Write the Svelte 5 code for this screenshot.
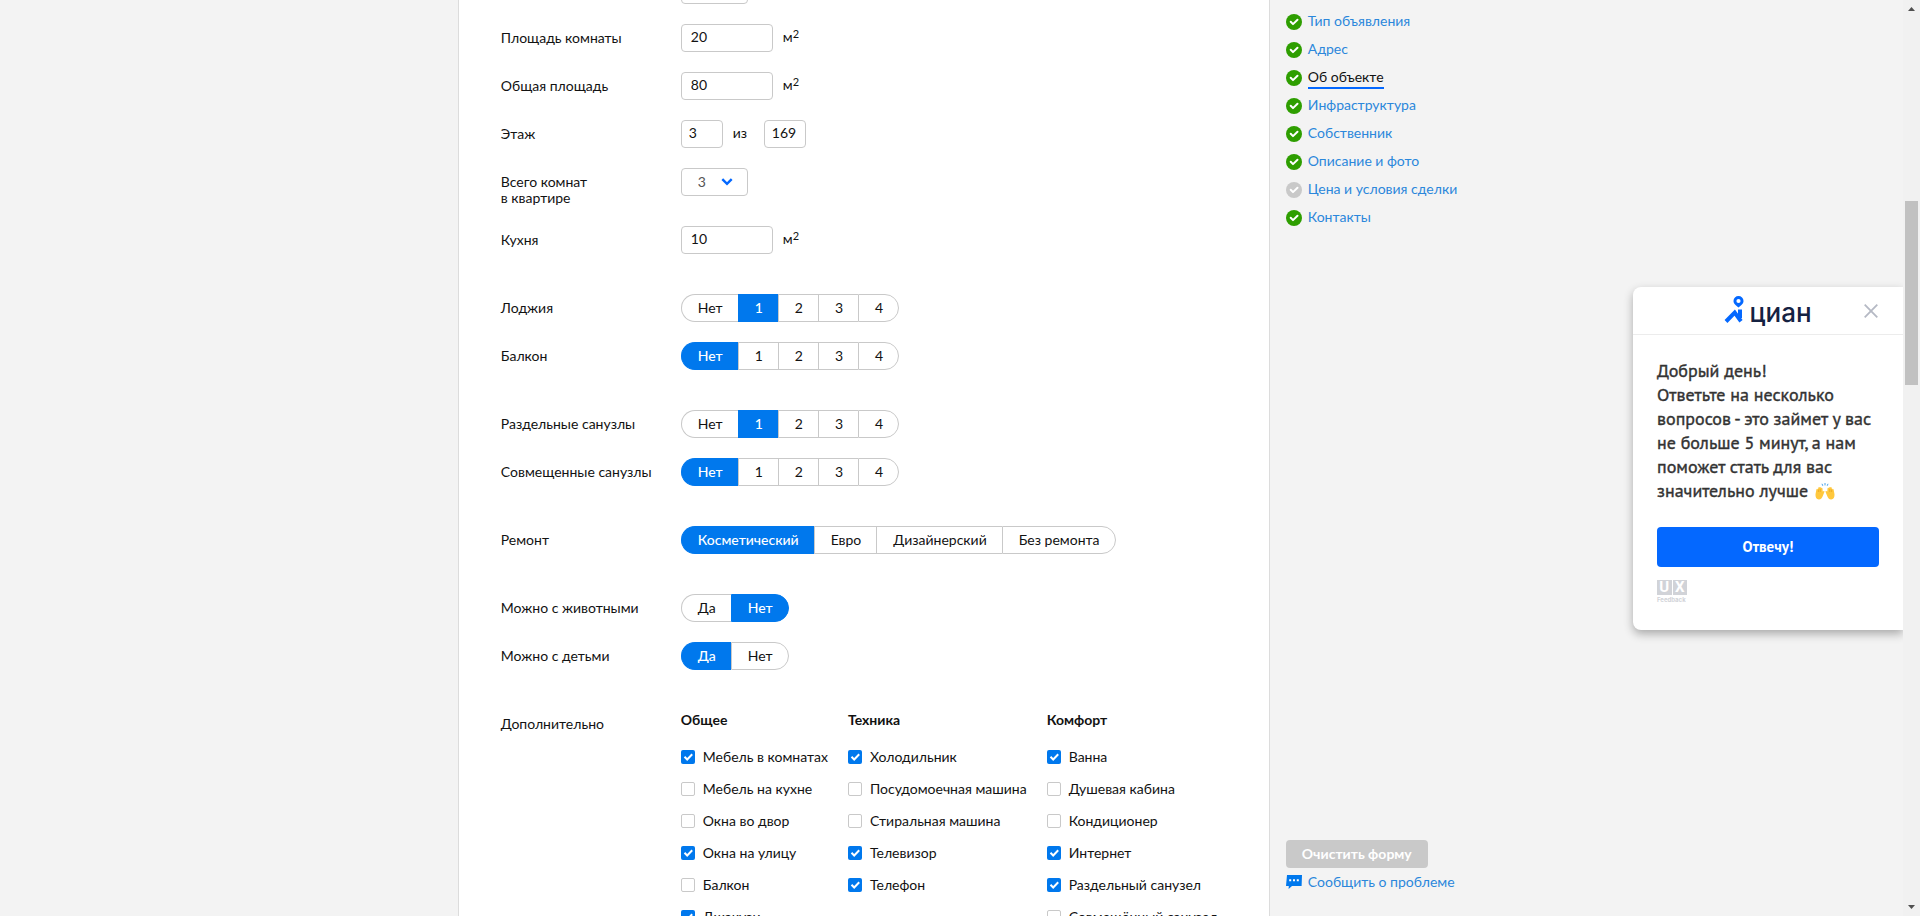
<script>
  const areaTop = [
    { id: 'room', label: 'Площадь комнаты', value: '20' },
    { id: 'total', label: 'Общая площадь', value: '80' }
  ];
  const counts = ['Нет', '1', '2', '3', '4'];
  let groups = $state([
    [
      { id: 'loggia', label: 'Лоджия', options: counts, value: '1' },
      { id: 'balcony', label: 'Балкон', options: counts, value: 'Нет' }
    ],
    [
      { id: 'separate', label: 'Раздельные санузлы', options: counts, value: '1' },
      { id: 'combined', label: 'Совмещенные санузлы', options: counts, value: 'Нет' }
    ],
    [
      {
        id: 'repair',
        label: 'Ремонт',
        options: ['Косметический', 'Евро', 'Дизайнерский', 'Без ремонта'],
        value: 'Косметический'
      }
    ],
    [
      { id: 'pets', label: 'Можно с животными', options: ['Да', 'Нет'], value: 'Нет' },
      { id: 'kids', label: 'Можно с детьми', options: ['Да', 'Нет'], value: 'Да' }
    ]
  ]);
  const extras = [
    {
      title: 'Общее',
      items: [
        ['Мебель в комнатах', true],
        ['Мебель на кухне', false],
        ['Окна во двор', false],
        ['Окна на улицу', true],
        ['Балкон', false],
        ['Джакузи', true]
      ]
    },
    {
      title: 'Техника',
      items: [
        ['Холодильник', true],
        ['Посудомоечная машина', false],
        ['Стиральная машина', false],
        ['Телевизор', true],
        ['Телефон', true]
      ]
    },
    {
      title: 'Комфорт',
      items: [
        ['Ванна', true],
        ['Душевая кабина', false],
        ['Кондиционер', false],
        ['Интернет', true],
        ['Раздельный санузел', true],
        ['Совмещённый санузел', false]
      ]
    }
  ];
  const nav = [
    { label: 'Тип объявления', done: true },
    { label: 'Адрес', done: true },
    { label: 'Об объекте', done: true, current: true },
    { label: 'Инфраструктура', done: true },
    { label: 'Собственник', done: true },
    { label: 'Описание и фото', done: true },
    { label: 'Цена и условия сделки', done: false },
    { label: 'Контакты', done: true }
  ];
</script>

{#snippet area(id, label, value)}
  <div class="row">
    <label class="name" for={id}>{label}</label>
    <div class="field">
      <input class="text wide" {id} type="text" {value} />
      <span class="unit">м<sup>2</sup></span>
    </div>
  </div>
{/snippet}

{#snippet dropdown(id)}
  <div class="select">
    <select {id} aria-label="Количество комнат">
      <option>3</option>
      <option>4</option>
      <option>5</option>
    </select>
    <svg width="12" height="8" viewBox="0 0 12 8" aria-hidden="true">
      <path d="M1.3 1.2 6 5.9l4.7-4.7" fill="none" stroke="#0468ff" stroke-width="2.4" />
    </svg>
  </div>
{/snippet}

<div class="shell">
  <div class="page">
    <main>
      <form>
        <div class="block">
          <div class="row">
            <span class="name"></span>
            {@render dropdown('rooms-offered')}
          </div>
          {#each areaTop as a}
            {@render area(a.id, a.label, a.value)}
          {/each}
          <div class="row">
            <label class="name" for="floor">Этаж</label>
            <div class="field">
              <input class="text narrow" id="floor" type="text" value="3" />
              <label class="of" for="floors">из</label>
              <input class="text narrow" id="floors" type="text" value="169" />
            </div>
          </div>
          <div class="row">
            <label class="name" for="rooms-total">Всего комнат<br />в квартире</label>
            {@render dropdown('rooms-total')}
          </div>
          {@render area('kitchen', 'Кухня', '10')}
        </div>

        {#each groups as group}
          <div class="block">
            {#each group as row}
              <div class="row">
                <span class="name" id="{row.id}-label">{row.label}</span>
                <div class="segments" role="radiogroup" aria-labelledby="{row.id}-label">
                  {#each row.options as option}
                    <label class:on={row.value === option}>
                      <input type="radio" name={row.id} value={option} bind:group={row.value} />
                      {option}
                    </label>
                  {/each}
                </div>
              </div>
            {/each}
          </div>
        {/each}

        <div class="row">
          <span class="name">Дополнительно</span>
          <div class="extras">
            {#each extras as col}
              <fieldset>
                <legend>{col.title}</legend>
                {#each col.items as [text, checked]}
                  <label class="check">
                    <input type="checkbox" {checked} />
                    <svg width="14" height="14" viewBox="0 0 14 14" aria-hidden="true">
                      <path d="M3.5 6.8 6.2 9.500l5-5.200" fill="none" stroke="#fff" stroke-width="2" />
                    </svg>
                    <span>{text}</span>
                  </label>
                {/each}
              </fieldset>
            {/each}
          </div>
        </div>
      </form>
    </main>

    <aside>
      <nav>
        {#each nav as item}
          <a href="#section" class:current={item.current}>
            <svg width="16" height="16" viewBox="0 0 16 16" aria-hidden="true">
              <circle cx="8" cy="8" r="8" fill={item.done ? '#2e9e00' : '#c9c9c9'} />
              <path
                d="M4.700 7.800 7 10.100l4.500-4.300"
                fill="none"
                stroke="#fff"
                stroke-width="2"
                stroke-linecap="round"
                stroke-linejoin="round"
              />
            </svg>
            <span>{item.label}</span>
          </a>
        {/each}
      </nav>
      <div class="actions">
        <button type="button" class="clear">Очистить форму</button>
        <a href="#report">
          <svg width="16" height="14" viewBox="0 0 16 14" aria-hidden="true">
            <path d="M1 0h15l-.4 11H6l-3.400 3 .2-3H0z" fill="#0078ed" />
            <path d="M3.200 4.200h2v2h-2zM7 4.200h2v2H7zM10.800 4.200h2v2h-2z" fill="#fff" />
          </svg>
          <span>Сообщить о проблеме</span>
        </a>
      </div>
    </aside>
  </div>

  <section class="survey" aria-label="Опрос">
    <header>
      <span></span>
      <div class="logo">
        <svg width="20" height="29" viewBox="0 0 20 29" aria-hidden="true">
          <path
            fill-rule="evenodd"
            d="M14.500 0a5 5 0 0 0-5 5c0 3 2.500 4.200 5 6.600 2.500-2.400 5-3.600 5-6.600a5 5 0 0 0-5-5zm0 2.900a2.100 2.100 0 1 1 0 4.200 2.100 2.100 0 0 1 0-4.200z"
            fill="#0468ff"
          />
          <path
            d="M2 25.500 10.700 16.600 17 25.200M16 13.500v8.500"
            fill="none"
            stroke="#0468ff"
            stroke-width="4"
          />
        </svg>
        <span>циан</span>
      </div>
      <button type="button" aria-label="Закрыть">
        <svg width="14" height="14" viewBox="0 0 14 14" aria-hidden="true">
          <path d="M.7.7l12.600 12.600M13.300.7.7 13.300" stroke="#b5b9c4" stroke-width="1.800" />
        </svg>
      </button>
    </header>
    <div class="body">
      <p>
        Добрый день!<br />Ответьте на несколько<br />вопросов - это займет у вас<br />не больше 5 минут, а нам<br
        />поможет стать для вас<br />значительно лучше
        <svg width="20" height="17" viewBox="0 0 20 17" aria-hidden="true">
          <path
            d="M1.400 6.500c.5-1.200 1.400-.8 1.500.2l.5-2.200c.3-.8 1.300-.7 1.400.1.400-.6 1.400-.4 1.400.4.700-.4 1.300 0 1.300.8l.2 2.700c1-.9 2-.6 1.700.4l-1.600 4.200c-.7 1.900-1.800 3.400-4 3.400C1.400 16.500.3 14.300.5 11.300z"
            fill="#ffc83d"
          />
          <path
            d="M18.600 6.500c-.5-1.200-1.400-.8-1.500.2l-.5-2.200c-.3-.8-1.300-.7-1.400.1-.4-.6-1.400-.4-1.400.4-.7-.4-1.300 0-1.300.8l-.2 2.700c-1-.9-2-.6-1.700.4l1.600 4.200c.7 1.900 1.800 3.400 4 3.400 2.400 0 3.500-2.200 3.300-5.200z"
            fill="#ffc83d"
          />
          <path d="M3.400 6.500v2.500M5.200 6v3M16.600 6.500v2.500M14.800 6v3" stroke="#e8a01c" stroke-width=".7" />
          <path d="M10 0v2.400M7 .8l.8 2M13 .8l-.8 2" stroke="#4aa3e8" stroke-width="1" />
        </svg>
      </p>
      <button type="button" class="answer">Отвечу!</button>
      <div class="ux">
        <div><b>U</b><b>X</b></div>
        <small>Feedback</small>
      </div>
    </div>
  </section>

  <div class="scrollbar" aria-hidden="true">
    <svg width="17" height="17" viewBox="0 0 17 17"><path d="M5 11h7L8.500 7z" fill="#505050" /></svg>
    <div class="track"><div class="thumb"></div></div>
    <svg width="17" height="17" viewBox="0 0 17 17"><path d="M5 6h7L8.500 10z" fill="#505050" /></svg>
  </div>
</div>

<style>
  :global(body) {
    margin: 0;
    background: #f3f3f3;
  }
  .shell {
    position: relative;
    display: flex;
    height: 100vh;
    overflow: hidden;
    font: 14px/16px Lato, 'Open Sans', sans-serif;
    color: #121212;
  }
  .page {
    flex: 1;
    display: flex;
    justify-content: center;
    gap: 16px;
    padding-left: 12px;
  }
  main {
    flex: 0 1 768px;
    padding: 0 0 0 42px;
    background: #fff;
    border: solid #dcdcdc;
    border-width: 0 1px;
  }
  form {
    margin-top: -24px;
  }
  .block {
    margin-bottom: 40px;
  }
  .row {
    display: flex;
    align-items: flex-start;
    min-height: 28px;
  }
  .row + .row {
    margin-top: 20px;
  }
  .name {
    flex: 0 0 180px;
    padding-top: 6px;
  }
  .field {
    display: flex;
    align-items: center;
  }
  .text,
  select {
    box-sizing: border-box;
    height: 28px;
    border: 1px solid #c9c9c9;
    border-radius: 4px;
    background: #fff;
    font: inherit;
    color: inherit;
  }
  .text {
    padding: 0 9px 3px;
  }
  .wide {
    width: 92px;
  }
  .narrow {
    width: 42px;
    padding: 0 7px 3px;
  }
  .unit {
    margin-left: 10px;
    padding-bottom: 2px;
  }
  sup {
    font-size: 11px;
    line-height: 0;
    vertical-align: 4px;
  }
  .of {
    width: 31px;
    padding: 0 0 2px 10px;
  }
  .select {
    display: grid;
    align-items: center;
    width: 67px;
  }
  .select > * {
    grid-area: 1 / 1;
  }
  .select svg {
    justify-self: end;
    margin-right: 15px;
    pointer-events: none;
  }
  select {
    width: 100%;
    padding: 0 16px;
    appearance: none;
    color: #555;
  }
  .segments {
    display: flex;
  }
  .segments label {
    box-sizing: border-box;
    height: 28px;
    padding: 5px 15px 5px 16px;
    border: solid #c9c9c9;
    border-width: 1px 0 1px 1px;
  }
  .segments label:first-child {
    border-radius: 14px 0 0 14px;
  }
  .segments label:last-child {
    border-right-width: 1px;
    border-radius: 0 14px 14px 0;
  }
  .segments .on {
    border-color: #0078ed;
    background: #0078ed;
    color: #fff;
    font-weight: 500;
  }
  .segments input,
  .check input {
    position: absolute;
    opacity: 0;
    width: 1px;
    height: 1px;
    margin: 0;
  }
  .extras {
    display: flex;
    gap: 20px;
  }
  fieldset {
    margin: 0;
    padding: 0;
    border: 0;
    min-width: 0;
  }
  legend {
    padding: 2px 0 20px;
    font-weight: 700;
  }
  .check {
    display: flex;
    align-items: center;
    gap: 8px;
    height: 18px;
    margin-bottom: 14px;
    white-space: nowrap;
  }
  .check svg {
    box-sizing: border-box;
    border: 1px solid #c9c9c9;
    border-radius: 2px;
  }
  .check input:checked + svg {
    border: 0;
    background: #0078ed;
  }
  aside {
    box-sizing: border-box;
    flex: 0 0 160px;
    display: flex;
    flex-direction: column;
    justify-content: space-between;
    height: 100vh;
    padding: 8px 0 26px;
  }
  nav {
    display: flex;
    flex-direction: column;
  }
  aside a {
    display: flex;
    align-items: center;
    gap: 6px;
    color: #2b87db;
    text-decoration: none;
    white-space: nowrap;
  }
  nav a {
    height: 28px;
  }
  nav span {
    padding-bottom: 2px;
  }
  nav .current {
    color: #121212;
  }
  .current span {
    padding-top: 2px;
    border-bottom: 2px solid #0468ff;
  }
  .actions {
    display: flex;
    flex-direction: column;
    align-items: flex-start;
    gap: 6px;
  }
  button {
    border: 0;
    font: inherit;
    cursor: pointer;
  }
  .clear {
    height: 28px;
    padding: 0 16px;
    border-radius: 4px;
    background: #c9c9c9;
    color: #fff;
    font-weight: 700;
  }
  .survey {
    position: absolute;
    top: 287px;
    right: 17px;
    width: 270px;
    border-radius: 8px 0 0 8px;
    background: #fff;
    box-shadow: 0 4px 10px rgba(0, 0, 0, 0.3);
    clip-path: inset(-20px 0 -20px -20px);
    color: #333;
  }
  header {
    display: grid;
    grid-template-columns: 1fr auto 1fr;
    align-items: center;
    height: 47px;
    border-bottom: 1px solid #ececec;
  }
  .logo {
    display: flex;
    align-items: center;
    gap: 5px;
  }
  .logo span {
    padding-top: 4px;
    font: 500 26px/24px Inter, sans-serif;
    color: #152242;
  }
  header button {
    display: flex;
    justify-self: end;
    padding: 0 25px;
    background: none;
  }
  .body {
    padding: 24px 24px 26px;
  }
  p {
    margin: 0 0 24px;
    font: 500 18px/24px 'PT Sans', 'Noto Sans', sans-serif;
    -webkit-text-stroke: 0.4px #333;
    white-space: nowrap;
  }
  p svg {
    margin-left: 2px;
    vertical-align: -3px;
  }
  .answer {
    display: block;
    width: 100%;
    height: 40px;
    border-radius: 4px;
    background: #0468ff;
    color: #fff;
    font: 700 15px/20px 'PT Sans', 'Noto Sans', sans-serif;
  }
  .ux {
    width: 30px;
    margin-top: 13px;
    color: #d1d3d8;
  }
  .ux div {
    display: flex;
    gap: 1px;
  }
  b {
    flex: 1;
    background: #d1d3d8;
    color: #fff;
    font: 700 15px/15px Roboto, sans-serif;
    text-align: center;
  }
  small {
    display: block;
    font: 700 6px/9px Inter, sans-serif;
  }
  .scrollbar {
    flex: 0 0 17px;
    display: flex;
    flex-direction: column;
    background: #f1f1f1;
  }
  .track {
    flex: 1;
    padding: 184px 2px 0;
  }
  .thumb {
    height: 184px;
    background: #c1c1c1;
  }
</style>
